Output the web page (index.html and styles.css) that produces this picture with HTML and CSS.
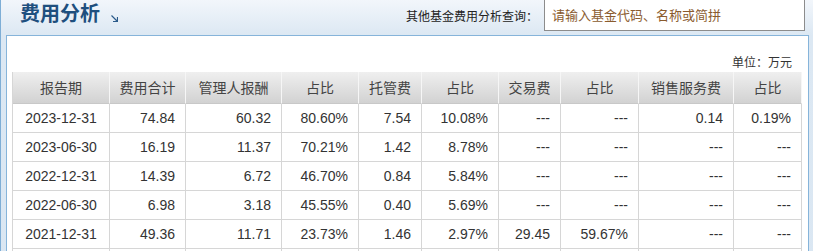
FILE: index.html
```html
<!DOCTYPE html>
<html lang="zh-CN">
<head>
<meta charset="utf-8">
<title>费用分析</title>
<link rel="stylesheet" href="styles.css">
</head>
<body>
<div class="page">
  <div class="head">
    <h2 class="title">费用分析</h2>
    <svg class="arrow" width="7" height="7" viewBox="0 0 7 7"><path d="M0.5 0.5 L6 6 M6.5 2 V6.5 H2" fill="none" stroke="#2b5b8b" stroke-width="1.2"/></svg>
    <div class="search">
      <span class="search-label">其他基金费用分析查询：</span>
      <div class="search-box">请输入基金代码、名称或简拼</div>
    </div>
  </div>
  <div class="panel">
    <div class="unit">单位：万元</div>
    <table class="fees">
      <thead>
        <tr>
          <th class="c1">报告期</th>
          <th class="c2">费用合计</th>
          <th class="c3">管理人报酬</th>
          <th class="c4">占比</th>
          <th class="c5">托管费</th>
          <th class="c6">占比</th>
          <th class="c7">交易费</th>
          <th class="c8">占比</th>
          <th class="c9">销售服务费</th>
          <th class="c10">占比</th>
        </tr>
      </thead>
      <tbody>
        <tr><td class="date">2023-12-31</td><td>74.84</td><td>60.32</td><td>80.60%</td><td>7.54</td><td>10.08%</td><td>---</td><td>---</td><td>0.14</td><td>0.19%</td></tr>
        <tr><td class="date">2023-06-30</td><td>16.19</td><td>11.37</td><td>70.21%</td><td>1.42</td><td>8.78%</td><td>---</td><td>---</td><td>---</td><td>---</td></tr>
        <tr><td class="date">2022-12-31</td><td>14.39</td><td>6.72</td><td>46.70%</td><td>0.84</td><td>5.84%</td><td>---</td><td>---</td><td>---</td><td>---</td></tr>
        <tr><td class="date">2022-06-30</td><td>6.98</td><td>3.18</td><td>45.55%</td><td>0.40</td><td>5.69%</td><td>---</td><td>---</td><td>---</td><td>---</td></tr>
        <tr><td class="date">2021-12-31</td><td>49.36</td><td>11.71</td><td>23.73%</td><td>1.46</td><td>2.97%</td><td>29.45</td><td>59.67%</td><td>---</td><td>---</td></tr>
        <tr><td class="date"></td><td></td><td></td><td></td><td></td><td></td><td></td><td></td><td></td><td></td></tr>
      </tbody>
    </table>
  </div>
</div>
</body>
</html>
```

FILE: styles.css
```css
html, body {
  margin: 0;
  padding: 0;
  height: 100%;
  overflow: hidden;
}
body {
  font-family: "Liberation Sans", "Noto Sans CJK SC", sans-serif;
  background: #d9e6f2;
}
.page {
  min-height: 100%;
  border-left: 1px solid #7eaed6;
  padding: 0 4px 0 5px;
  background: linear-gradient(#f2f6fb 0, #dce8f3 35px, #d9e6f2 100%);
}
.head {
  display: flex;
  align-items: flex-start;
  height: 35px;
}
.title {
  margin: 0 0 0 14px;
  padding-top: 2px;
  font-size: 20px;
  font-weight: bold;
  line-height: 24px;
  color: #1e4f7e;
  font-family: "Liberation Sans", "Noto Sans CJK SC", sans-serif;
}
.arrow {
  display: block;
  margin: 15px 0 0 11px;
}
.search {
  margin: -1px 4px 0 auto;
  display: flex;
  align-items: center;
}
.search-label {
  font-size: 12px;
  color: #222;
  margin-right: 6px;
  font-family: "Noto Sans CJK SC", sans-serif;
}
.search-box {
  width: 252px;
  height: 30px;
  line-height: 30px;
  padding-left: 7px;
  border: 1px solid #8c8c8c;
  background: #fff;
  font-size: 13px;
  color: #8a5b2e;
  font-family: "Noto Sans CJK SC", sans-serif;
}
.panel {
  background: #fff;
  border: 1px solid #86b4da;
  padding-left: 5px;
  height: 400px;
}
.unit {
  text-align: right;
  font-size: 12px;
  color: #333;
  line-height: 18px;
  padding: 17px 16px 1px 0;
  font-family: "Noto Sans CJK SC", sans-serif;
}
.fees {
  table-layout: fixed;
  width: 790px;
  border-collapse: separate;
  border-spacing: 0;
  border-left: 1px solid #d6d6d6;
  font-size: 14px;
  color: #333;
}
.fees th {
  box-sizing: border-box;
  height: 32px;
  padding: 0;
  font-weight: normal;
  color: #444;
  line-height: 31px;
  text-align: center;
  background: linear-gradient(#efefef, #d2d2d2);
  border-right: 1px solid #f6f6f6;
  border-bottom: 1px solid #c8c8c8;
  font-family: "Noto Sans CJK SC", sans-serif;
}
.fees td {
  box-sizing: border-box;
  height: 29px;
  padding: 0 10px 0 0;
  line-height: 28px;
  text-align: right;
  border-right: 1px solid #d6d6d6;
  border-bottom: 1px solid #d6d6d6;
  white-space: nowrap;
}
.fees td.date {
  text-align: center;
  padding: 0;
}
.c1 { width: 97px; }
.c2 { width: 76px; }
.c3 { width: 96px; }
.c4 { width: 77px; }
.c5 { width: 63px; }
.c6 { width: 77px; }
.c7 { width: 62px; }
.c8 { width: 78px; }
.c9 { width: 95px; }
.c10 { width: 68px; }
```
